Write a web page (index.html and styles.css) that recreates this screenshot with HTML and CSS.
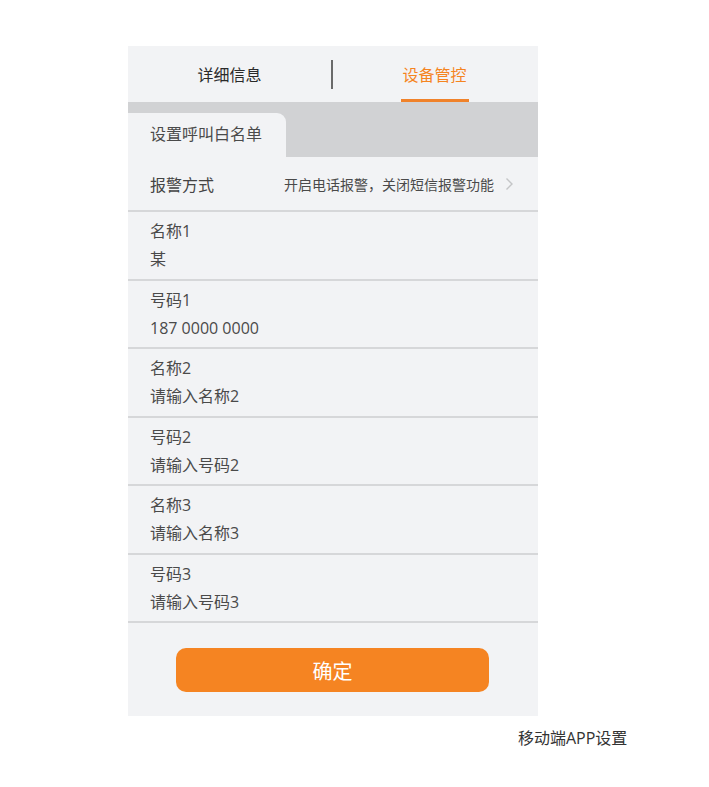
FILE: index.html
```html
<!DOCTYPE html>
<html lang="zh">
<head>
<meta charset="utf-8">
<link rel="stylesheet" href="styles.css">
</head>
<body>
<div class="panel">
  <div class="header">
    <div class="htab">详细信息</div>
    <div class="hdiv"></div>
    <div class="htab active"><span>设备管控</span></div>
  </div>
  <div class="band">
    <div class="subtab">设置呼叫白名单</div>
  </div>
  <div class="alarm">
    <span class="alabel">报警方式</span>
    <span class="avalue">开启电话报警，关闭短信报警功能</span>
    <svg class="chev" width="9" height="14" viewBox="0 0 9 14"><path d="M1.5 1.5 L7 7 L1.5 12.5" fill="none" stroke="#c4c5c7" stroke-width="1.4"/></svg>
  </div>
  <div class="row"><div class="rl">名称1</div><div class="rv">某</div></div>
  <div class="row"><div class="rl">号码1</div><div class="rv">187 0000 0000</div></div>
  <div class="row"><div class="rl">名称2</div><div class="rv">请输入名称2</div></div>
  <div class="row"><div class="rl">号码2</div><div class="rv">请输入号码2</div></div>
  <div class="row"><div class="rl">名称3</div><div class="rv">请输入名称3</div></div>
  <div class="row"><div class="rl">号码3</div><div class="rv">请输入号码3</div></div>
  <div class="foot">
    <div class="btn">确定</div>
  </div>
</div>
<div class="caption">移动端APP设置</div>
</body>
</html>
```
FILE: styles.css
```css
* { box-sizing: border-box; }
body {
  margin: 0;
  background: #ffffff;
  font-family: "Open Sans", "Noto Sans CJK SC", sans-serif;
  color: #4a4a4a;
}
.panel {
  margin: 46px 0 0 128px;
  width: 410px;
  background: #f2f3f5;
}
.header {
  height: 56px;
  display: flex;
  align-items: center;
}
.htab {
  flex: 1;
  height: 56px;
  display: flex;
  justify-content: center;
  align-items: center;
  font-size: 16px;
  color: #2a2a2a;
}
.htab.active {
  color: #f5841f;
  align-items: stretch;
  padding-right: 2px;
}
.htab.active span {
  display: flex;
  align-items: center;
  border-bottom: 3px solid #f0822a;
  padding-top: 3px;
  width: 68px;
  justify-content: center;
}
.hdiv {
  width: 2px;
  height: 29px;
  background: #6a6a6a;
}
.band {
  height: 55px;
  background: #d1d2d4;
  display: flex;
  align-items: flex-end;
}
.subtab {
  width: 158px;
  height: 44px;
  background: #f2f3f5;
  border-top-right-radius: 9px;
  font-size: 16px;
  color: #4a4a4a;
  padding-left: 22px;
  line-height: 42px;
}
.alarm {
  height: 55px;
  display: flex;
  align-items: center;
  padding: 0 24px 0 22px;
  border-bottom: 2px solid #d6d7d9;
}
.alabel {
  font-size: 16px;
  flex: 1;
  color: #444;
}
.avalue {
  font-size: 14px;
  color: #4a4a4a;
  margin-right: 11px;
}
.chev { display: block; }
.row {
  height: 68.5px;
  padding: 8px 22px 0;
  border-bottom: 2px solid #d6d7d9;
  font-size: 16px;
  color: #4a4a4a;
}
.rl { line-height: 23px; }
.rv { line-height: 33px; }
.foot {
  padding: 25px 0 24px 48px;
}
.btn {
  width: 313px;
  height: 44px;
  background: #f58422;
  border-radius: 10px;
  color: #ffffff;
  font-size: 20px;
  display: flex;
  align-items: center;
  justify-content: center;
}
.caption {
  margin: 11px 0 0 518px;
  font-size: 16px;
  line-height: 22px;
  color: #333;
}
```
